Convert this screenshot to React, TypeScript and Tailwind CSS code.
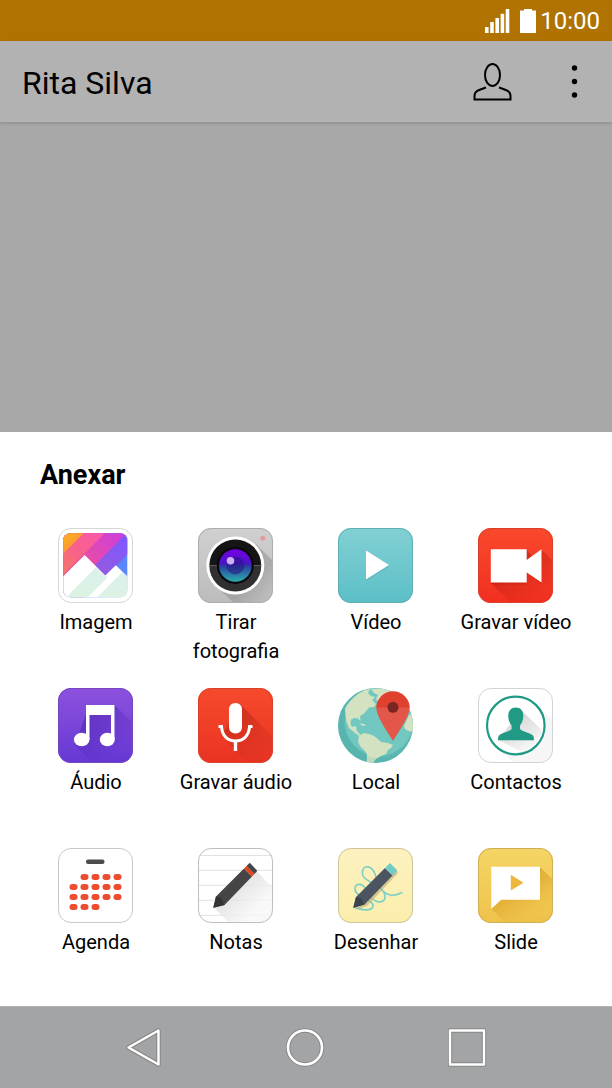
import { useId, type ReactNode } from "react";

type TileProps = {
	from: string;
	to: string;
	stroke: string;
	children: ReactNode;
};

// Rounded square shared by all the launcher style icons
const Tile = ({ from, to, stroke, children }: TileProps) => {
	const id = useId();

	return (
		<svg viewBox="0 0 76 76" className="size-[76px]" aria-hidden="true">
			<defs>
				<linearGradient id={`${id}-bg`} x1="0" y1="0" x2="0" y2="1">
					<stop offset="0" stopColor={from} />
					<stop offset="1" stopColor={to} />
				</linearGradient>
				<clipPath id={`${id}-clip`}>
					<rect x="0" y="0" width="75" height="75" rx="13" />
				</clipPath>
			</defs>
			<g clipPath={`url(#${id}-clip)`}>
				<rect width="75" height="75" fill={`url(#${id}-bg)`} />
				{children}
			</g>
			<rect x="0.5" y="0.5" width="74" height="74" rx="12.5" fill="none" stroke={stroke} />
		</svg>
	);
};

const ImageIcon = () => (
	<Tile from="#ffffff" to="#ffffff" stroke="#d6d6d8">
		<defs>
			<clipPath id="picture">
				<rect x="5.3" y="5.3" width="64" height="64" rx="7" />
			</clipPath>
			<linearGradient id="sunrise" gradientUnits="userSpaceOnUse" x1="5" y1="5" x2="17" y2="17">
				<stop offset="0" stopColor="#fcb417" />
				<stop offset="1" stopColor="#f9963a" />
			</linearGradient>
			<linearGradient id="coral" gradientUnits="userSpaceOnUse" x1="5" y1="48" x2="48" y2="5">
				<stop offset="0" stopColor="#f47a62" />
				<stop offset="0.45" stopColor="#f8618a" />
				<stop offset="1" stopColor="#fb57ae" />
			</linearGradient>
			<linearGradient id="magenta" gradientUnits="userSpaceOnUse" x1="28" y1="45" x2="69" y2="5">
				<stop offset="0" stopColor="#ee4f9b" />
				<stop offset="1" stopColor="#c83fe0" />
			</linearGradient>
			<linearGradient id="violet" gradientUnits="userSpaceOnUse" x1="45" y1="48" x2="69" y2="10">
				<stop offset="0" stopColor="#9659e0" />
				<stop offset="1" stopColor="#7c58ff" />
			</linearGradient>
			<linearGradient id="mint" x1="0" y1="0" x2="0" y2="1">
				<stop offset="0" stopColor="#dceff0" />
				<stop offset="1" stopColor="#dcf3e1" />
			</linearGradient>
		</defs>
		<g clipPath="url(#picture)">
			<rect width="75" height="75" fill="#5a86fb" />
			<path d="M0 0H96L0 96Z" fill="url(#violet)" />
			<path d="M0 0H74L0 74Z" fill="url(#magenta)" />
			<path d="M0 0H52L0 52Z" fill="url(#coral)" />
			<path d="M0 0H31L0 31Z" fill="url(#sunrise)" />
			<path d="M5 48.5 26.7 27 47.3 47.5 57.8 37.3 70 49V70H5Z" fill="#fff" />
			<path d="M8 69.5 38 39 47.3 48 49.5 49.5 29.5 69.5Z" fill="url(#mint)" />
			<path d="M39 69.5 64.5 44 70 49.5V69.5Z" fill="url(#mint)" />
		</g>
	</Tile>
);

const CameraIcon = () => (
	<Tile from="#d0d0d1" to="#bcbcbc" stroke="#adadad">
		<defs>
			<linearGradient id="lens" x1="0" y1="0" x2="0" y2="1">
				<stop offset="0" stopColor="#7400e6" />
				<stop offset="0.45" stopColor="#4b14c4" />
				<stop offset="0.52" stopColor="#2c3fa0" />
				<stop offset="1" stopColor="#2ab0ae" />
			</linearGradient>
			<linearGradient id="camera-shadow" gradientUnits="userSpaceOnUse" x1="37" y1="37" x2="70" y2="70">
				<stop offset="0.5" stopColor="#8c8c8c" />
				<stop offset="1" stopColor="#8c8c8c" stopOpacity="0" />
			</linearGradient>
		</defs>
		<path d="M58 16 98 56V98H60L18 58Z" fill="url(#camera-shadow)" opacity="0.5" />
		<circle cx="37.3" cy="37.5" r="29" fill="#fff" />
		<path d="M11.3 37.5a26 26 0 0 1 52 0Z" fill="#151515" />
		<path d="M11.3 37.5a26 26 0 0 0 52 0Z" fill="#303030" />
		<circle cx="37.3" cy="37.5" r="18.5" fill="#08080f" />
		<circle cx="37.3" cy="37.5" r="16.3" fill="url(#lens)" />
		<circle cx="37.3" cy="37.5" r="9" fill="#27147f" opacity="0.55" />
		<circle cx="32.5" cy="32.8" r="3.8" fill="#cbb0f4" />
		<circle cx="64.8" cy="10.2" r="2.5" fill="#e39a9a" />
	</Tile>
);

const VideoIcon = () => (
	<Tile from="#82d0d3" to="#5bbfc7" stroke="#62b0b5">
		<path d="M28 24V53L51 38.5Z" fill="#3b9aa0" opacity="0.3" />
		<path d="M28 22.5V51.5L51 37Z" fill="#fff" />
	</Tile>
);

const RecordVideoIcon = () => (
	<Tile from="#f9492c" to="#f22f20" stroke="#d8402d">
		<defs>
			<linearGradient id="record-video-shadow" gradientUnits="userSpaceOnUse" x1="38" y1="38" x2="58" y2="70">
				<stop offset="0" stopColor="#b81a10" stopOpacity="0.5" />
				<stop offset="1" stopColor="#c0200f" stopOpacity="0.03" />
			</linearGradient>
		</defs>
		<path d="M13 55 48.5 21.5 55 29 63.5 22 92 50V92H50Z" fill="url(#record-video-shadow)" />
		<path d="M13 22.5H48.5V33.5L63.5 22V56L48.5 44.5V56.5H13Z" fill="#b91d12" opacity="0.4" />
		<path d="M12.8 21.2H48.7V32L63.5 21.2V54.5L48.7 44.5V54.5H12.8Z" fill="#fff" />
	</Tile>
);

const AudioIcon = () => (
	<Tile from="#8d52de" to="#6638d4" stroke="#7546c0">
		<defs>
			<linearGradient id="audio-shadow" gradientUnits="userSpaceOnUse" x1="32" y1="30" x2="60" y2="66">
				<stop offset="0" stopColor="#4a20ab" stopOpacity="0.5" />
				<stop offset="1" stopColor="#5426b8" stopOpacity="0.04" />
			</linearGradient>
		</defs>
		<path d="M56.5 17 90 50V90H50L17 57 28 26Z" fill="url(#audio-shadow)" />
		<path d="M28 17H56.5V51.5H53V27H31.5V51.5H28Z" fill="#fff" />
		<ellipse cx="23.7" cy="51.5" rx="7.8" ry="6.8" fill="#fff" />
		<ellipse cx="49.3" cy="51.5" rx="7.5" ry="6.8" fill="#fff" />
	</Tile>
);

const RecordAudioIcon = () => (
	<Tile from="#f64a2c" to="#ea3323" stroke="#d8422d">
		<defs>
			<linearGradient id="record-audio-shadow" gradientUnits="userSpaceOnUse" x1="40" y1="30" x2="66" y2="66">
				<stop offset="0" stopColor="#b02415" stopOpacity="0.5" />
				<stop offset="1" stopColor="#c92b1c" stopOpacity="0.12" />
			</linearGradient>
		</defs>
		<path d="M42 16 88 62V90H65L38 63 24 47Z" fill="url(#record-audio-shadow)" />
		<rect x="31" y="15" width="13" height="30.5" rx="6.2" fill="#fff" />
		<path d="M20.5 38.5H23.5C24 48 30 53 37.5 53S51 48 51.5 38.5H54.5" fill="none" stroke="#fff" strokeWidth="3" />
		<path d="M37.5 53V63" stroke="#fff" strokeWidth="3.4" />
	</Tile>
);

const LocationIcon = () => (
	<svg viewBox="0 0 76 76" className="size-[76px]" aria-hidden="true">
		<defs>
			<clipPath id="globe">
				<circle cx="37.5" cy="37.5" r="37.5" />
			</clipPath>
		</defs>
		<g clipPath="url(#globe)">
			<rect width="76" height="76" fill="#5cb8b2" />
			<circle cx="41" cy="34" r="34" fill="#72c8c1" />
			<path
				d="M7 21C11 13 18 6 27 2L32 1 30 5 33 8 37 9 34 12 38 16 36 19 31 19.5 29 22 26 25.500 22 28 22.500 33 20 30.500 16 30 13 31.500 12.500 36 14 39 18 38 18.500 42 21 45.500 23 46.500 21 48 16 44 11 40 8.300 33 7.500 27Z"
				fill="#d3e2c0"
			/>
			<path d="M33 1 46 0 54 3 49 6 46 12 41 15 38 11 40 7 36 5Z" fill="#d3e2c0" />
			<path d="M21 35.5 26 36 28 38 24 37.5Z" fill="#d3e2c0" />
			<path
				d="M21 48 26 45 31 46 36 48 40 51 43 54 50 55 55 57 53 60 50 62 48 66 43 68 38 71 35 75H28.700L29 66 26 62 22.700 59 20 54Z"
				fill="#d3e2c0"
			/>
			<path d="M66 38 71 27 76 26V44L70 43 67 41Z" fill="#d3e2c0" />
			<path d="M7 20A38 38 0 0 0 60 66V76H0V20Z" fill="#3b9d97" opacity="0.12" />
		</g>
		<path d="M38.3 20A16.7 16.7 0 0 1 71.7 20Z" fill="#e0402e" />
		<path d="M38.3 19.5H71.7C71.7 28 63 40 55 53 47 40 38.3 28 38.3 19.5Z" fill="#e2574a" />
		<circle cx="55" cy="19.3" r="5.5" fill="#7a2724" />
	</svg>
);

const ContactsIcon = () => (
	<Tile from="#ffffff" to="#ffffff" stroke="#d3d3da">
		<defs>
			<linearGradient id="contact-shadow" gradientUnits="userSpaceOnUse" x1="40" y1="30" x2="60" y2="60">
				<stop offset="0" stopColor="#d9d9d9" />
				<stop offset="1" stopColor="#fafafa" />
			</linearGradient>
		</defs>
		<path d="M60 18 95 53V95H60L18 59Z" fill="#f6f6f6" />
		<circle cx="37.8" cy="37.5" r="28.5" fill="#fff" />
		<path d="M43 22 64 42A28 28 0 0 1 44 64L20 52Z" fill="url(#contact-shadow)" />
		<circle cx="37.8" cy="37.5" r="28.8" fill="none" stroke="#219a85" strokeWidth="2.2" />
		<path
			d="M30.3 28C30.3 22.5 33 19.5 37.8 19.5S45.3 22.5 45.3 28C45.3 32 44 35 42 37.5V41C44 43.5 51 44.5 54.5 47 55.8 48 56 50 56 52.3H20C20 50 20.2 48 21.5 47 25 44.5 31.5 43.5 33.6 41V37.5C31.5 35 30.3 32 30.3 28Z"
			fill="#219a85"
		/>
	</Tile>
);

const AgendaIcon = () => {
	// first and last week of the month are not full
	const weeks = [
		{ y: 29, days: [1, 2, 3, 4] },
		{ y: 39, days: [0, 1, 2, 3, 4] },
		{ y: 49, days: [0, 1, 2, 3, 4] },
		{ y: 59, days: [0, 1, 2] },
	];

	return (
		<Tile from="#ffffff" to="#ffffff" stroke="#c9c9c9">
			<rect x="28" y="11.5" width="18.5" height="4.5" rx="2" fill="#4c4c4c" />
			{weeks.map((week) =>
				week.days.map((day) => (
					<rect
						key={`${week.y}-${day}`}
						x={11.5 + day * 11}
						y={week.y - 3}
						width="8"
						height="6"
						rx="2.9"
						fill="#ec4c2f"
					/>
				))
			)}
		</Tile>
	);
};

const NotesIcon = () => (
	<Tile from="#ffffff" to="#ffffff" stroke="#bfbfbf">
		<defs>
			<linearGradient id="notes-shadow" gradientUnits="userSpaceOnUse" x1="36" y1="38" x2="58" y2="62">
				<stop offset="0" stopColor="#dcdcdc" />
				<stop offset="1" stopColor="#f7f7f7" />
			</linearGradient>
		</defs>
		<path d="M0 7.5H75M0 22.3H75M0 37.3H75M0 52.3H75M0 67.3H75" stroke="#e2e2e2" />
		<path d="M58.5 23 92 57V92H48L16 59.5Z" fill="url(#notes-shadow)" opacity="0.8" />
		<path d="M15.3 59.8 18 48.5 46 20.5 54 28.5 26.5 57Z" fill="#454545" />
		<path d="M15.3 59.8 18 48.5 23 49.5 26.5 57Z" fill="#343434" />
		<path d="M46 20.5 48.5 18 56.5 26 54 28.5Z" fill="#e8431f" />
		<path d="M48.5 18 51.8 14.8 59.3 22.8 56.5 26Z" fill="#454545" />
	</Tile>
);

const DrawIcon = () => (
	<Tile from="#fdf1c0" to="#fbeeac" stroke="#cfc59c">
		<path
			d="M16 59C22 62 34 64 35 58 36 51 17 50 17 41 17 35 24 35 27 40 31 48 35 54 41 54 50 54 48 44 41 39 32 33 23 31 24.5 23 26 16 34 18 37 26 40 36 43 45 52 47 58 48 61 46 64 44.5"
			fill="none"
			stroke="#7bd0c5"
			strokeWidth="1.6"
			strokeLinecap="round"
		/>
		<path d="M17 62 29 58 60 25 57 20Z" fill="#b7a878" opacity="0.6" />
		<path d="M15.3 59.8 18 49 47 20 54.5 27.5 26.5 56.5Z" fill="#4b5460" />
		<path d="M15.3 59.8 18 49 22.5 50 26.5 56.5Z" fill="#39424d" />
		<path d="M47 20 52 15 59.3 22.5 54.5 27.5Z" fill="#72ccc6" />
	</Tile>
);

const SlideIcon = () => (
	<Tile from="#f5d566" to="#efc34a" stroke="#cfae58">
		<defs>
			<linearGradient id="slide-shadow" gradientUnits="userSpaceOnUse" x1="36" y1="45" x2="50" y2="70">
				<stop offset="0" stopColor="#d99e23" stopOpacity="0.6" />
				<stop offset="1" stopColor="#e5b038" stopOpacity="0.08" />
			</linearGradient>
		</defs>
		<path d="M62 19 92 49V92H45L13.5 61Z" fill="url(#slide-shadow)" />
		<path d="M13.3 18.8H62V51.7H23L13.3 60.8Z" fill="#fff" />
		<path d="M32.8 26.8V42.5L45.5 34.7Z" fill="#edb63c" />
	</Tile>
);

const attachments = [
	{ label: "Imagem", icon: <ImageIcon /> },
	{ label: "Tirar fotografia", icon: <CameraIcon /> },
	{ label: "Vídeo", icon: <VideoIcon /> },
	{ label: "Gravar vídeo", icon: <RecordVideoIcon /> },
	{ label: "Áudio", icon: <AudioIcon /> },
	{ label: "Gravar áudio", icon: <RecordAudioIcon /> },
	{ label: "Local", icon: <LocationIcon /> },
	{ label: "Contactos", icon: <ContactsIcon /> },
	{ label: "Agenda", icon: <AgendaIcon /> },
	{ label: "Notas", icon: <NotesIcon /> },
	{ label: "Desenhar", icon: <DrawIcon /> },
	{ label: "Slide", icon: <SlideIcon /> },
];

const StatusBar = () => (
	<div className="flex h-[41px] items-center justify-end bg-[#b07200] pr-3 text-white">
		<svg viewBox="0 0 52 24" className="mr-1 h-6 w-[52px]" fill="currentColor" aria-hidden="true">
			<path d="M1 18H4.600V24H1ZM6.200 13H9.800V24H6.200ZM11.400 9H15V24H11.400ZM16.600 4.700H20.200V24H16.600ZM21.700 0H25.300V24H21.700Z" />
			<path d="M36 1.500H40V0H48V1.500H52V24H36Z" />
		</svg>
		<span className="text-2xl leading-6">10:00</span>
	</div>
);

const Header = () => (
	<header className="flex h-[82px] items-center border-b border-[#999999] bg-[#b2b2b2] pr-[18px] pl-[22px] shadow-sm">
		<h1 className="flex-1 pt-0.5 text-[32px] text-black">Rita Silva</h1>
		<button type="button" aria-label="Perfil" className="mr-[42px] flex size-10 items-center justify-center">
			<svg viewBox="0 0 40 40" className="size-10" fill="none" stroke="#000" strokeWidth="2">
				<ellipse cx="20.5" cy="13" rx="7.5" ry="11" />
				<path d="M14 25.500C8 27.500 2.500 28.500 2.500 34V37.500H38.500V34C38.500 28.500 33 27.500 27 25.500" />
			</svg>
		</button>
		<button type="button" aria-label="Mais opções" className="flex size-10 items-center justify-center">
			<svg viewBox="0 0 40 40" className="size-10" fill="#000">
				<circle cx="20.5" cy="6" r="2.7" />
				<circle cx="20.5" cy="19.5" r="2.7" />
				<circle cx="20.5" cy="33" r="2.7" />
			</svg>
		</button>
	</header>
);

const AttachSheet = () => (
	<section className="bg-white pt-[23px] pb-5">
		<h2 className="pl-10 text-[27px] leading-[40px] font-bold text-black">Anexar</h2>
		<div className="mt-[33px] grid auto-rows-[138px] grid-cols-4 gap-y-[22px] px-[26px]">
			{attachments.map((item) => (
				<button key={item.label} type="button" className="flex flex-col items-center px-3">
					{item.icon}
					<span className="-mx-3 mt-1 max-w-[130px] text-xl leading-[29px] text-black">
						{item.label}
					</span>
				</button>
			))}
		</div>
	</section>
);

const NavBar = () => (
	<nav className="flex h-[82px] items-center justify-center gap-[122px] border-t border-[#b4b4b4] bg-[#a3a4a6]">
		<button type="button" aria-label="Voltar">
			<svg viewBox="0 0 40 40" className="size-10" fill="none" strokeLinejoin="round">
				<path d="M4.500 19.500 34.500 2.500V36.500Z" stroke="#878787" strokeWidth="4.500" />
				<path d="M4.500 19.500 34.500 2.500V36.500Z" stroke="#fff" strokeWidth="2.400" />
			</svg>
		</button>
		<button type="button" aria-label="Início">
			<svg viewBox="0 0 40 40" className="size-10" fill="none">
				<circle cx="19" cy="19.5" r="17" stroke="#878787" strokeWidth="4.5" />
				<circle cx="19" cy="19.5" r="17" stroke="#fff" strokeWidth="2.6" />
			</svg>
		</button>
		<button type="button" aria-label="Recentes">
			<svg viewBox="0 0 40 40" className="size-10" fill="none" strokeLinejoin="round">
				<rect x="2" y="2.5" width="34" height="34" stroke="#878787" strokeWidth="4.5" />
				<rect x="2" y="2.5" width="34" height="34" stroke="#fff" strokeWidth="2.4" />
			</svg>
		</button>
	</nav>
);

const App = () => {
	return (
		<div className="flex min-h-screen flex-col bg-[#a8a8a8] font-[Roboto,sans-serif]">
			<StatusBar />
			<Header />
			<main className="flex flex-1 flex-col justify-end">
				<AttachSheet />
			</main>
			<NavBar />
		</div>
	);
};

export default App;
